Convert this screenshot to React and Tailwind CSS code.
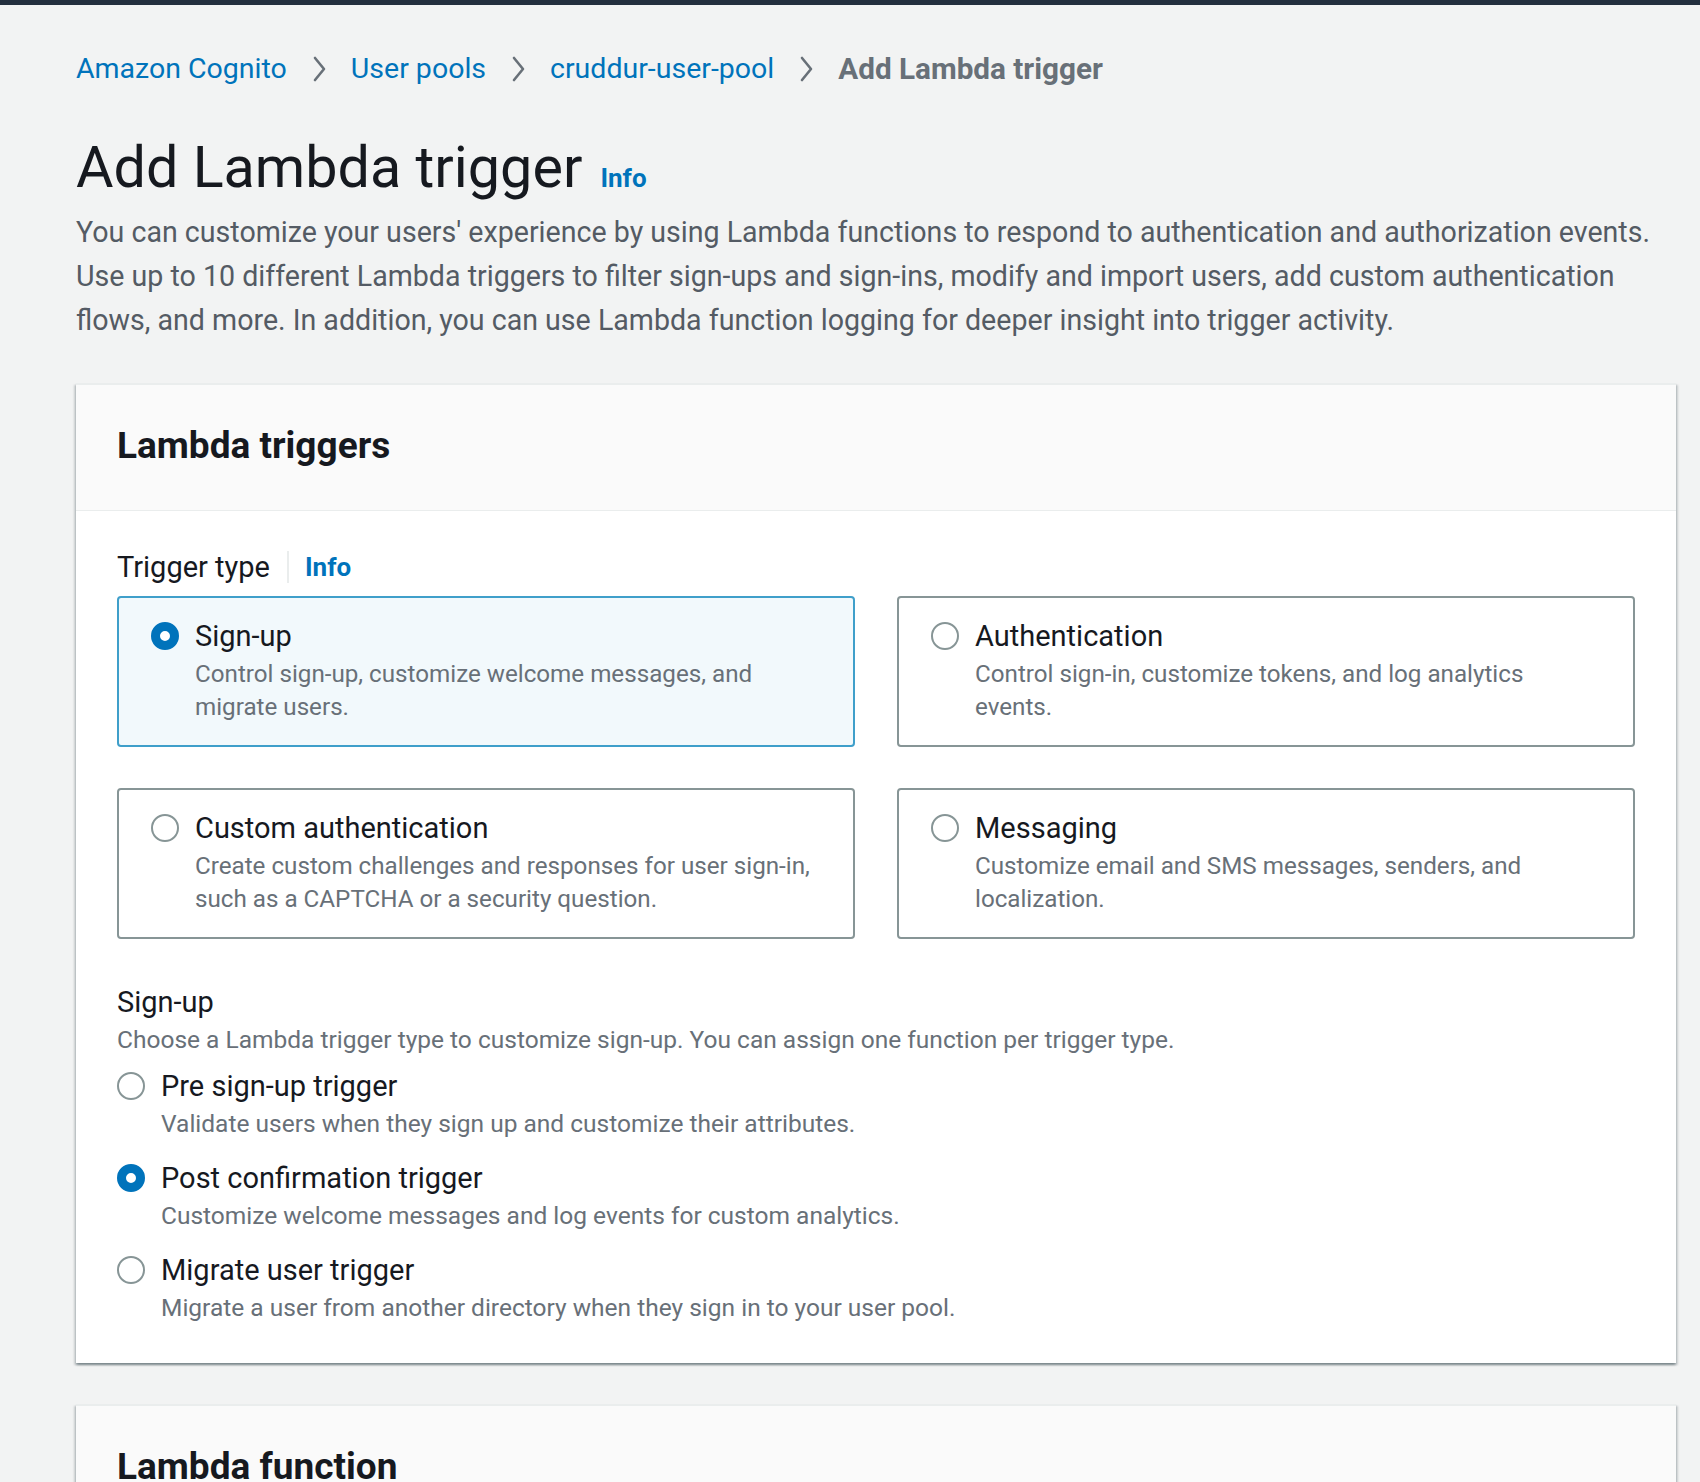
import React, { useState } from 'react';

const Chevron = () => (
  <svg width="14" height="28" viewBox="0 0 14 28" className="mx-[25px] shrink-0">
    <path d="M3 3 L12 14 L3 25" fill="none" stroke="#687078" strokeWidth="2.6" strokeLinecap="round" strokeLinejoin="round" />
  </svg>
);

const Radio = ({ checked }) => (
  <span
    className={
      checked
        ? 'block h-[28px] w-[28px] shrink-0 rounded-full border-[9px] border-[#0073bb] bg-white'
        : 'block h-[28px] w-[28px] shrink-0 rounded-full border-2 border-[#879596] bg-white'
    }
  />
);

const triggerTypes = [
  {
    id: 'signup',
    title: 'Sign-up',
    lines: ['Control sign-up, customize welcome messages, and', 'migrate users.'],
  },
  {
    id: 'auth',
    title: 'Authentication',
    lines: ['Control sign-in, customize tokens, and log analytics', 'events.'],
  },
  {
    id: 'custom',
    title: 'Custom authentication',
    lines: ['Create custom challenges and responses for user sign-in,', 'such as a CAPTCHA or a security question.'],
  },
  {
    id: 'messaging',
    title: 'Messaging',
    lines: ['Customize email and SMS messages, senders, and', 'localization.'],
  },
];

const signupTriggers = [
  {
    id: 'pre',
    title: 'Pre sign-up trigger',
    desc: 'Validate users when they sign up and customize their attributes.',
  },
  {
    id: 'post',
    title: 'Post confirmation trigger',
    desc: 'Customize welcome messages and log events for custom analytics.',
  },
  {
    id: 'migrate',
    title: 'Migrate user trigger',
    desc: 'Migrate a user from another directory when they sign in to your user pool.',
  },
];

const panelShadow =
  'shadow-[0_2px_2px_0_rgba(0,28,36,0.3),2px_2px_2px_0_rgba(0,28,36,0.15),-2px_2px_2px_0_rgba(0,28,36,0.15)]';

export default function App() {
  const [type, setType] = useState('signup');
  const [trigger, setTrigger] = useState('post');

  return (
    <div className="h-[1482px] overflow-hidden bg-[#f2f3f3] font-['Roboto',sans-serif] text-[#16191f]">
      <div className="h-[5px] bg-[#232f3e]" />

      <div className="pl-[76px] pr-[24px]">
        {/* Breadcrumbs */}
        <nav className="mt-[44px] flex h-[40px] items-center text-[28.5px] leading-[40px]">
          <a className="text-[#0073bb]">Amazon Cognito</a>
          <Chevron />
          <a className="text-[#0073bb]">User pools</a>
          <Chevron />
          <a className="text-[#0073bb]">cruddur-user-pool</a>
          <Chevron />
          <span className="text-[29.7px] font-bold text-[#687078]">Add Lambda trigger</span>
        </nav>

        {/* Page header */}
        <div className="mt-[47px] flex h-[64px] items-baseline">
          <h1 className="text-[57.5px] font-normal leading-[64px]">Add Lambda trigger</h1>
          <a className="ml-[18px] text-[26px] font-bold text-[#0073bb]">Info</a>
        </div>
        <p className="mt-[10px] text-[28.6px] leading-[44px] text-[#545b64]">
          You can customize your users' experience by using Lambda functions to respond to authentication and
          authorization events.
          <br />
          Use up to 10 different Lambda triggers to filter sign-ups and sign-ins, modify and import users, add custom
          authentication
          <br />
          flows, and more. In addition, you can use Lambda function logging for deeper insight into trigger activity.
        </p>

        {/* Lambda triggers panel */}
        <section className={`mt-[41px] border-t-2 border-[#eaeded] bg-white ${panelShadow}`}>
          <div className="flex h-[126px] items-center border-b border-[#eaeded] bg-[#fafafa] px-[41px] pb-[4px]">
            <h2 className="text-[37px] font-bold leading-[40px]">Lambda triggers</h2>
          </div>

          <div className="px-[41px] pb-[39px] pt-[40px]">
            <div className="flex h-[32px] items-center">
              <span className="text-[29px] leading-[32px]">Trigger type</span>
              <span className="ml-[17px] mr-[16px] h-[32px] w-[2px] bg-[#eaeded]" />
              <a className="text-[26px] font-bold text-[#0073bb]">Info</a>
            </div>

            <div className="mt-[13px] grid grid-cols-2 gap-x-[42px] gap-y-[41px]">
              {triggerTypes.map((t) => {
                const on = type === t.id;
                return (
                  <div
                    key={t.id}
                    onClick={() => setType(t.id)}
                    className={
                      on
                        ? 'flex h-[151px] cursor-pointer gap-[16px] rounded-[4px] border-2 border-[#3f9fca] bg-[#f2f9fc] pl-[32px] pr-[20px] pt-[20px]'
                        : 'flex h-[151px] cursor-pointer gap-[16px] rounded-[4px] border-2 border-[#879596] bg-white pl-[32px] pr-[20px] pt-[20px]'
                    }
                  >
                    <div className="mt-[4px]">
                      <Radio checked={on} />
                    </div>
                    <div className="min-w-0">
                      <div className="text-[29px] leading-[36px]">{t.title}</div>
                      <div className="mt-[4px] whitespace-nowrap text-[24.2px] leading-[33px] text-[#687078]">
                        {t.lines[0]}
                        <br />
                        {t.lines[1]}
                      </div>
                    </div>
                  </div>
                );
              })}
            </div>

            <div className="mt-[47px] text-[29px] leading-[32px]">Sign-up</div>
            <div className="mt-[5px] text-[24.5px] leading-[33px] text-[#687078]">
              Choose a Lambda trigger type to customize sign-up. You can assign one function per trigger type.
            </div>

            <div className="mt-[13px] flex flex-col gap-[21px]">
              {signupTriggers.map((t) => (
                <div key={t.id} onClick={() => setTrigger(t.id)} className="flex cursor-pointer gap-[16px]">
                  <div className="mt-[3px]">
                    <Radio checked={trigger === t.id} />
                  </div>
                  <div>
                    <div className="text-[29px] leading-[34px]">{t.title}</div>
                    <div className="mt-[4px] text-[24.5px] leading-[33px] text-[#687078]">{t.desc}</div>
                  </div>
                </div>
              ))}
            </div>
          </div>
        </section>

        {/* Lambda function panel */}
        <section className={`mt-[41px] border-t-2 border-[#eaeded] bg-white ${panelShadow}`}>
          <div className="flex h-[126px] items-center border-b border-[#eaeded] bg-[#fafafa] px-[41px] pb-[4px]">
            <h2 className="text-[37px] font-bold leading-[40px]">Lambda function</h2>
          </div>
          <div className="h-[200px]" />
        </section>
      </div>
    </div>
  );
}
